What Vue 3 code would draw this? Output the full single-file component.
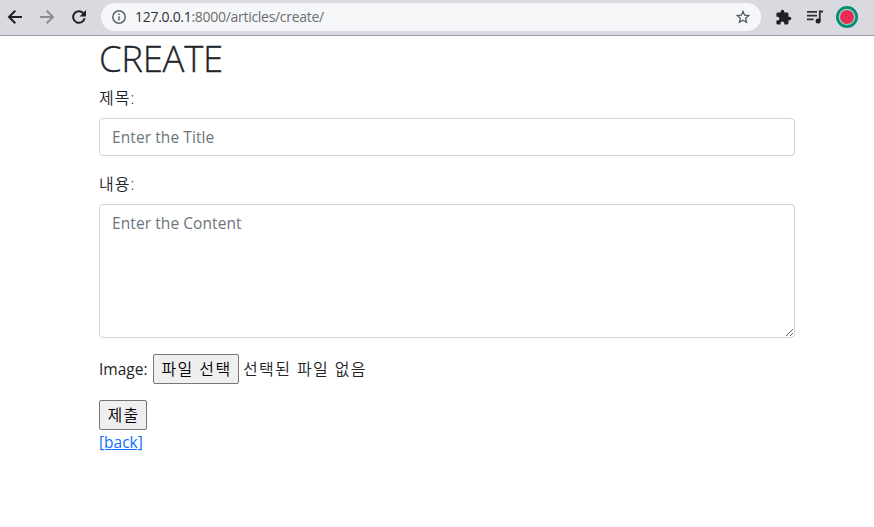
<script setup>
import { ref } from 'vue'

const title = ref('')
const content = ref('')
</script>

<template>
  <div class="window">
    <header class="toolbar">
      <svg class="nav" viewBox="0 0 16 16"><path d="M15 8H2M8.3 1.7L2 8l6.3 6.3" /></svg>
      <svg class="nav muted" viewBox="0 0 16 16"><path d="M1 8h13M7.7 1.7L14 8l-6.3 6.3" /></svg>
      <svg class="nav" viewBox="0 0 16 16"><path d="M13.6 9.2A5.8 5.8 0 1 1 12.2 4.1L13.6 5.6" /><path class="solid" d="M15 1v6.4H8.6z" /></svg>
      <div class="address">
        <svg class="info" viewBox="0 0 14 14"><circle cx="7" cy="7" r="6.2" /><path d="M7 6.2v4.3M7 3.4v1.5" /></svg>
        <span class="url"><b>127.0.0.1</b>:8000/articles/create/</span>
        <svg class="star" viewBox="0 0 14 14"><path d="M7 1.4l1.65 3.75 4.05.4-3.05 2.7.9 4L7 10.15l-3.55 2.1.9-4L1.3 5.55l4.05-.4z" /></svg>
      </div>
      <svg class="puzzle" viewBox="0 0 24 24"><path d="M20.500 11H19V7c0-1.100-.9-2-2-2h-4V3.500a2.500 2.500 0 0 0-5 0V5H4c-1.100 0-2 .9-2 2v3.800h1.500a2.700 2.700 0 0 1 0 5.400H2V20c0 1.100.9 2 2 2h3.800v-1.500a2.700 2.700 0 0 1 5.400 0V22H17c1.100 0 2-.9 2-2v-4h1.500a2.500 2.500 0 0 0 0-5z" /></svg>
      <svg class="media" viewBox="0 0 16 14"><path d="M0 1.800h10M0 5.600h10M0 9.400h6.500M12.800 11V1.500h3.200" /><circle cx="11.100" cy="11" r="2.500" /></svg>
      <svg class="avatar" viewBox="0 0 22 22">
        <circle cx="11" cy="11" r="11" fill="#078b78" />
        <circle cx="11" cy="11" r="8.300" fill="#8ce0b8" />
        <circle cx="11" cy="11" r="7" fill="#f72b59" />
        <circle class="seeds" cx="11" cy="11" r="4.700" />
        <circle class="seeds" cx="11" cy="11" r="2" />
      </svg>
    </header>

    <main class="page">
      <h1>CREATE</h1>
      <form @submit.prevent>
        <label class="caption" for="title">제목:</label>
        <input id="title" v-model="title" class="control" type="text" placeholder="Enter the Title">
        <label class="caption" for="content">내용:</label>
        <textarea id="content" v-model="content" class="control area" placeholder="Enter the Content"></textarea>
        <div class="file">
          <span class="image">Image:</span>
          <button type="button">파일 선택</button>
          <span class="status">선택된 파일 없음</span>
        </div>
        <button class="submit" type="submit">제출</button>
      </form>
      <a href="#">[back]</a>
    </main>
  </div>
</template>

<style>
body {
  background: #fff;
  overflow: hidden;
}
</style>

<style scoped>
.window {
  height: 527px;
  font: 16px/24px "Open Sans", "Noto Sans CJK KR", sans-serif;
  font-weight: 350;
  color: #212529;
}
.toolbar {
  box-sizing: border-box;
  display: flex;
  align-items: center;
  height: 36px;
  padding: 0 16px 1px 7px;
  background: #d9dae0;
  border-bottom: 1px solid #96979b;
}
svg {
  display: block;
  flex: none;
}
.nav {
  width: 16px;
  height: 16px;
  margin-right: 16px;
  fill: none;
  stroke: #202124;
  stroke-width: 2;
}
.nav:nth-child(3) {
  margin-right: 14px;
}
.nav.muted {
  stroke: #8c8d91;
}
.nav .solid {
  fill: #202124;
  stroke: none;
}
.address {
  box-sizing: border-box;
  display: flex;
  align-items: center;
  width: 660px;
  height: 28px;
  padding: 0 11px;
  border-radius: 14px;
  background: #f5f7f9;
}
.info {
  width: 14px;
  height: 14px;
  fill: none;
  stroke: #5f6368;
  stroke-width: 1.5;
}
.url {
  flex: 1;
  margin-left: 9px;
  font: 14px/20px "Open Sans", sans-serif;
  letter-spacing: -0.29px;
  color: #6b6e72;
}
.url b {
  font-weight: 400;
  color: #303134;
}
.star {
  width: 14px;
  height: 14px;
  fill: none;
  stroke: #55585c;
  stroke-width: 1.3;
}
.puzzle {
  width: 17px;
  height: 17px;
  margin-left: 14px;
  fill: #202124;
}
.media {
  width: 16px;
  height: 14px;
  margin-left: 15px;
  fill: none;
  stroke: #303134;
  stroke-width: 1.8;
}
.media circle {
  fill: #202124;
  stroke: none;
}
.avatar {
  width: 22px;
  height: 22px;
  margin-left: auto;
}
.seeds {
  fill: none;
  stroke: #a82350;
  stroke-width: 1.1;
  stroke-dasharray: 1.1 2.6;
}
.page {
  width: 696px;
  padding-left: 99px;
}
h1 {
  margin: 0 0 6px;
  font-size: 36.5px;
  font-weight: 300;
  line-height: 44px;
  letter-spacing: -0.3px;
  -webkit-text-stroke: 0.3px #212529;
}
form {
  display: flex;
  flex-direction: column;
  align-items: flex-start;
}
.caption {
  margin-bottom: 8px;
  letter-spacing: 1px;
}
.control {
  box-sizing: border-box;
  display: block;
  width: 100%;
  height: 38px;
  margin: 0 0 16px;
  padding: 6px 12px;
  border: 1px solid #ced4da;
  border-radius: 4px;
  background: #fff;
  color: #212529;
  font: inherit;
  font-size: 15.5px;
  font-weight: 400;
  letter-spacing: 0.08px;
}
.control::placeholder {
  color: #6c757d;
  opacity: 1;
}
.area {
  height: 134px;
  resize: vertical;
}
.file {
  display: flex;
  align-items: center;
  height: 30px;
  margin-bottom: 16px;
}
.image {
  width: 54px;
  font-size: 15.5px;
  font-weight: 400;
  white-space: nowrap;
}
button {
  box-sizing: border-box;
  width: 86px;
  height: 30px;
  padding: 0 0 0 1px;
  border: 1px solid #767676;
  border-radius: 2px;
  background: #efefef;
  color: #000;
  font: inherit;
  letter-spacing: 1.4px;
  white-space: nowrap;
}
.status {
  margin-left: 4px;
  letter-spacing: 1.4px;
  white-space: nowrap;
}
.submit {
  width: 48px;
}
a {
  display: inline-block;
  color: #0d6efd;
  font-size: 15.5px;
  font-weight: 400;
  text-decoration: underline;
}
</style>
